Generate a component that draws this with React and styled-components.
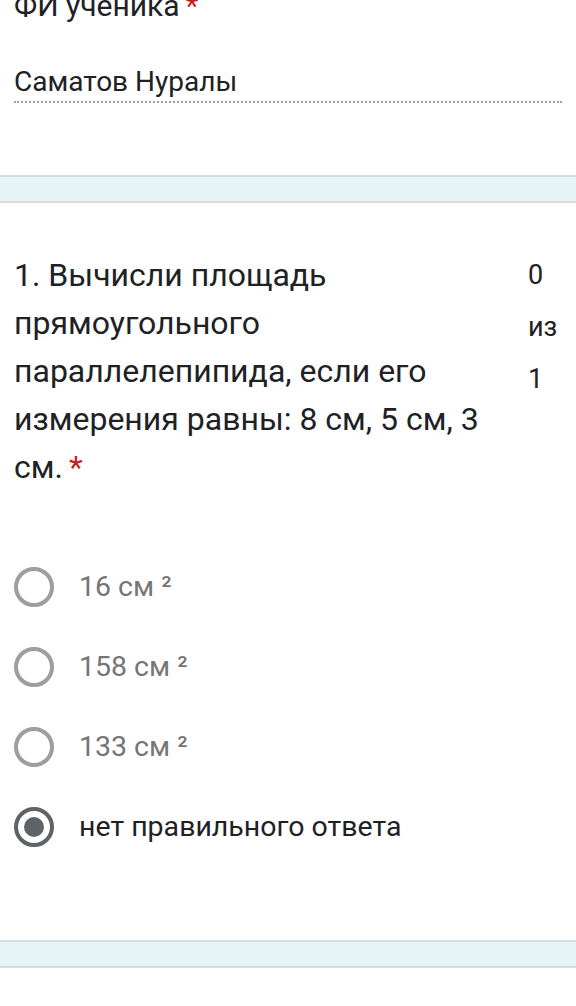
import React, { useState } from 'react';
import styled, { createGlobalStyle } from 'styled-components';

const GlobalStyle = createGlobalStyle`
  html, body {
    margin: 0;
    padding: 0;
    background: #ffffff;
    overflow: hidden;
  }
  body {
    font-family: Roboto, 'Noto Sans', Arial, sans-serif;
    color: #202124;
  }
`;

const Page = styled.div`
  width: 576px;
  margin-top: -14px;
`;

const Card = styled.section`
  padding: ${(p) => p.$pad};
  background: #ffffff;
`;

const FieldLabel = styled.div`
  font-size: 30px;
  line-height: 40px;
  color: #202124;
`;

const Required = styled.span`
  color: #c5221f;
  margin-left: 6px;
`;

const NameInput = styled.div`
  margin-top: 38px;
  padding-bottom: 1px;
  font-size: 28px;
  line-height: 36px;
  color: #202124;
  border-bottom: 2px dotted #9aa0a6;
`;

const Separator = styled.div`
  height: 24px;
  background: #e6f4f8;
  border-top: 2px solid #d5dde0;
  border-bottom: 2px solid #d5dde0;
`;

const TitleRow = styled.div`
  display: flex;
  align-items: flex-start;
  justify-content: space-between;
`;

const Title = styled.div`
  width: 484px;
  font-size: 32px;
  line-height: 48px;
  color: #202124;
`;

const Score = styled.div`
  width: 34px;
  margin-top: -2px;
  font-size: 27px;
  line-height: 52px;
  color: #202124;
  word-spacing: 20px;
`;

const Options = styled.div`
  display: flex;
  flex-direction: column;
  gap: 40px;
  margin-top: 76px;
`;

const Option = styled.label`
  display: flex;
  align-items: center;
  gap: 25px;
  height: 40px;
  cursor: pointer;
`;

const Radio = styled.span`
  box-sizing: border-box;
  width: 40px;
  height: 40px;
  border-radius: 50%;
  border: 4px solid ${(p) => (p.$checked ? '#5f6368' : '#9e9e9e')};
  display: flex;
  align-items: center;
  justify-content: center;
  flex-shrink: 0;

  &::after {
    content: '';
    width: 20px;
    height: 20px;
    border-radius: 50%;
    background: #5f6368;
    display: ${(p) => (p.$checked ? 'block' : 'none')};
  }
`;

const OptionText = styled.span`
  font-size: 28.5px;
  line-height: 40px;
  color: ${(p) => (p.$checked ? '#202124' : '#757575')};
`;

const answers = ['16 см ²', '158 см ²', '133 см ²', 'нет правильного ответа'];

export default function App() {
  const [selected, setSelected] = useState(3);

  return (
    <Page>
      <GlobalStyle />
      <Card $pad="0 14px 72px">
        <FieldLabel>
          ФИ ученика<Required>*</Required>
        </FieldLabel>
        <NameInput>Саматов Нуралы</NameInput>
      </Card>
      <Separator />
      <Card $pad="48px 14px 93px">
        <TitleRow>
          <Title>
            1. Вычисли площадь прямоугольного параллелепипида, если его измерения равны: 8 см, 5 см, 3 см.
            <Required>*</Required>
          </Title>
          <Score>0 из 1</Score>
        </TitleRow>
        <Options>
          {answers.map((a, i) => (
            <Option key={a} onClick={() => setSelected(i)}>
              <Radio $checked={selected === i} />
              <OptionText $checked={selected === i}>{a}</OptionText>
            </Option>
          ))}
        </Options>
      </Card>
      <Separator />
    </Page>
  );
}
